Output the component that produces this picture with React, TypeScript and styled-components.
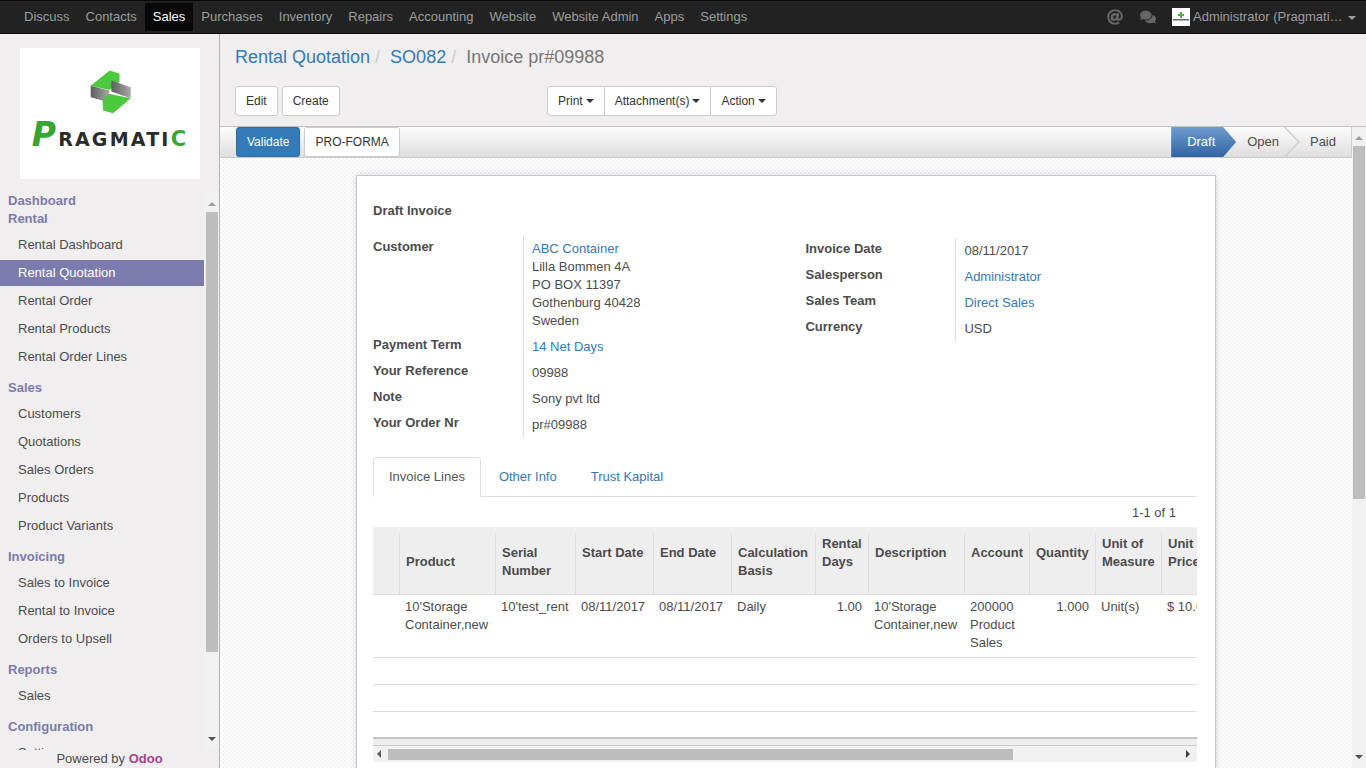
import React from 'react';
import styled, { createGlobalStyle } from 'styled-components';
import { FaAt, FaComments } from 'react-icons/fa';

const GlobalStyle = createGlobalStyle`
  html, body {
    margin: 0;
    height: 100%;
    overflow: hidden;
  }
  body {
    font-family: "Liberation Sans", Arial, sans-serif;
    font-size: 13px;
    line-height: 18px;
    color: #4c4c4c;
  }
  * {
    box-sizing: border-box;
  }
`;

const Page = styled.div`
  display: flex;
  flex-direction: column;
  width: 1366px;
  height: 768px;
  overflow: hidden;
`;

const Navbar = styled.nav`
  display: flex;
  align-items: center;
  justify-content: space-between;
  height: 34px;
  flex: none;
  padding: 0 4px 0 16px;
  background: #222;
  border: 1px solid #080808;
  border-width: 1px 0;
`;

const NavList = styled.div`
  display: flex;
  align-items: center;
`;

const NavItem = styled.a<{ $active?: boolean }>`
  height: 28px;
  padding: 5px 8px;
  color: ${p => (p.$active ? '#fff' : '#9d9d9d')};
  background: ${p => (p.$active ? '#080808' : 'transparent')};
`;

const NavRight = styled.div`
  display: flex;
  align-items: center;
  color: #9d9d9d;
`;

const NavIcon = styled.span<{ $gap: number }>`
  display: flex;
  color: #666;
  font-size: 16px;
  margin-right: ${p => p.$gap}px;
`;

const Avatar = styled.svg`
  width: 18px;
  height: 18px;
  margin-right: 3px;
  background: #fff;
`;

const UserName = styled.span`
  width: 150px;
  white-space: nowrap;
  overflow: hidden;
  text-overflow: ellipsis;
`;

const NavCaret = styled.span`
  width: 0;
  height: 0;
  margin: 2px 6px 0 5px;
  border-left: 4px solid transparent;
  border-right: 4px solid transparent;
  border-top: 4px solid #9d9d9d;
`;

const Body = styled.div`
  display: flex;
  flex: 1;
  min-height: 0;
`;

const Sidebar = styled.aside`
  display: flex;
  flex-direction: column;
  width: 220px;
  flex: none;
  background: #f0eeee;
  border-right: 1px solid #b4b4b4;
`;

const LogoBox = styled.div`
  display: flex;
  flex-direction: column;
  align-items: center;
  width: 180px;
  height: 131px;
  margin: 14px 0 13px 20px;
  padding-top: 20px;
  background: #fff;
  flex: none;
`;

const LogoWord = styled.div`
  display: flex;
  align-items: baseline;
  margin-top: 7px;
  font-family: "DejaVu Sans", sans-serif;
  font-weight: 700;
  font-size: 19px;
  line-height: 26px;
  letter-spacing: 2.2px;
  color: #2b2b2b;
  white-space: nowrap;
`;

const LogoGreen = styled.span<{ $big?: boolean }>`
  color: #3aa535;
  font-style: ${p => (p.$big ? 'italic' : 'normal')};
  font-size: ${p => (p.$big ? 33 : 21)}px;
  line-height: 26px;
`;

const MenuArea = styled.div`
  display: flex;
  flex: 1;
  min-height: 0;
`;

const MenuScroll = styled.div`
  width: 204px;
  overflow: hidden;
  flex: none;
`;

const MenuHeader = styled.div`
  padding-left: 8px;
  font-weight: 700;
  color: #7c7bad;
`;

const MenuList = styled.div`
  display: flex;
  flex-direction: column;
  gap: 2px;
  margin: 4px 0 9px;
`;

const MenuItem = styled.a<{ $active?: boolean }>`
  height: 26px;
  flex: none;
  padding: 4px 0 0 18px;
  color: ${p => (p.$active ? '#fff' : '#4c4c4c')};
  background: ${p => (p.$active ? '#7c7bad' : 'transparent')};
`;

const Track = styled.div<{ $wide: number }>`
  display: flex;
  flex-direction: column;
  align-items: center;
  width: ${p => p.$wide}px;
  flex: none;
  background: #f1f1f1;
`;

const TrackThumb = styled.div<{ $height: number; $top: number }>`
  width: 12px;
  height: ${p => p.$height}px;
  margin-top: ${p => p.$top}px;
  background: #bdbdbd;
  flex: none;
`;

const TrackSpacer = styled.div`
  flex: 1;
`;

const Arrow = styled.span<{ $dir: 'up' | 'down' | 'left' | 'right'; $color?: string }>`
  width: 0;
  height: 0;
  flex: none;
  border: 4px solid transparent;
  ${p => `border-${{ up: 'bottom', down: 'top', left: 'right', right: 'left' }[p.$dir]}-color: ${p.$color || '#505050'};`}
  ${p => `border-${p.$dir}-width: 0;`}
`;

const PoweredBy = styled.div`
  height: 18px;
  flex: none;
  text-align: center;
  line-height: 17px;
`;

const OdooWord = styled.b`
  color: #a24689;
`;

const Main = styled.main`
  display: flex;
  flex-direction: column;
  flex: 1;
  min-width: 0;
`;

const ControlPanel = styled.header`
  height: 93px;
  flex: none;
  padding: 10px 15px 0;
  background: #f0eeee;
  border-bottom: 1px solid #c0c0c0;
`;

const Breadcrumb = styled.div`
  display: flex;
  height: 26px;
  margin-bottom: 16px;
  font-size: 18px;
  line-height: 26px;
`;

const Crumb = styled.a<{ $current?: boolean }>`
  color: ${p => (p.$current ? '#777' : '#337ab7')};
`;

const CrumbSep = styled.span`
  padding: 0 5px;
  margin-right: 5px;
  color: #ccc;
`;

const Buttons = styled.div`
  display: flex;
`;

const LeftButtons = styled.div`
  display: flex;
  gap: 4px;
  width: 312px;
`;

const Button = styled.button`
  height: 30px;
  padding: 5px 10px;
  font: 12px/18px "Liberation Sans", Arial, sans-serif;
  color: #333;
  background: #fff;
  border: 1px solid #ccc;
  border-radius: 3px;
`;

const Group = styled.div`
  display: flex;
`;

const GroupButton = styled(Button)`
  display: flex;
  align-items: center;
  gap: 3px;
  border-radius: 0;
  margin-left: -1px;
  &:first-child {
    margin-left: 0;
    border-radius: 3px 0 0 3px;
  }
  &:last-child {
    border-radius: 0 3px 3px 0;
  }
`;

const Caret = styled.span`
  width: 0;
  height: 0;
  border-left: 4px solid transparent;
  border-right: 4px solid transparent;
  border-top: 4px solid #333;
`;

const Lower = styled.div`
  display: flex;
  flex: 1;
  min-height: 0;
`;

const Content = styled.div`
  display: flex;
  flex-direction: column;
  flex: 1;
  min-width: 0;
`;

const StatusBar = styled.div`
  display: flex;
  justify-content: space-between;
  height: 31px;
  flex: none;
  background: linear-gradient(#fcfcfc, #dedede);
  border-bottom: 1px solid #c8c8c8;
  border-right: 1px solid #cfcfcf;
`;

const StatusButtons = styled.div`
  display: flex;
  gap: 4px;
  padding-left: 16px;
`;

const PrimaryButton = styled(Button)`
  color: #fff;
  background: #337ab7;
  border-color: #2e6da4;
`;

const Steps = styled.div`
  display: flex;
  align-items: stretch;
  line-height: 30px;
`;

const ActiveStep = styled.div`
  width: 65px;
  padding-left: 16px;
  color: #fff;
  background: linear-gradient(#6c9ccd, #3464a3);
  clip-path: polygon(0 0, 52px 0, 100% 50%, 52px 100%, 0 100%);
`;

const Step = styled.div<{ $pad: number; $end?: number }>`
  padding-left: ${p => p.$pad}px;
  padding-right: ${p => p.$end || 0}px;
`;

const StepChevron = styled.svg`
  width: 16px;
  height: 30px;
  margin-left: 5px;
`;

const FormArea = styled.div`
  flex: 1;
  min-height: 0;
  overflow: hidden;
  padding-top: 17px;
  background: repeating-conic-gradient(#f5f5f5 0 25%, #fff 0 50%) 0 0 / 4px 4px;
`;

const Sheet = styled.section`
  width: 860px;
  height: 640px;
  margin: 0 auto;
  padding: 26px 18px 0 16px;
  background: #fff;
  border: 1px solid #c8c8d3;
  border-bottom: 0;
  box-shadow: 0 0 6px rgba(0, 0, 0, 0.16);
`;

const SheetTitle = styled.div`
  height: 34px;
  font-weight: 700;
`;

const Groups = styled.div`
  display: flex;
`;

const FieldGroup = styled.div<{ $top: number; $width: number; $label: number }>`
  display: grid;
  grid-template-columns: ${p => p.$label}px 1fr;
  align-content: start;
  width: ${p => p.$width}px;
  margin-top: ${p => p.$top}px;
`;

const FieldLabel = styled.div<{ $pad: number }>`
  padding-top: ${p => p.$pad}px;
  font-weight: 700;
`;

const FieldValue = styled.div`
  padding: 4px 0 4px 8px;
  border-left: 1px solid #ddd;
`;

const Link = styled.a`
  color: #337ab7;
`;

const Tabs = styled.div`
  display: flex;
  gap: 2px;
  height: 40px;
  margin-top: 19px;
  border-bottom: 1px solid #ddd;
`;

const Tab = styled.a<{ $active?: boolean }>`
  height: 40px;
  padding: 10px 15px;
  border: 1px solid ${p => (p.$active ? '#ddd' : 'transparent')};
  border-bottom-color: ${p => (p.$active ? '#fff' : 'transparent')};
  border-radius: 4px 4px 0 0;
  background: ${p => (p.$active ? '#fff' : 'transparent')};
  color: ${p => (p.$active ? '#555' : '#337ab7')};
`;

const Pager = styled.div`
  height: 30px;
  padding: 7px 21px 0 0;
  text-align: right;
`;

const TableClip = styled.div`
  width: 824px;
  overflow: hidden;
`;

const Table = styled.table`
  width: 900px;
  table-layout: fixed;
  border-collapse: separate;
  border-spacing: 0;
`;

const HeadCell = styled.th<{ $top: number }>`
  height: 68px;
  padding: ${p => p.$top}px 4px 0 7px;
  vertical-align: top;
  text-align: left;
  font-weight: 700;
  background: #eee linear-gradient(#ddd, #ddd) left 6px / 1px 100% no-repeat;
  border-bottom: 1px solid #ddd;
  &:first-child {
    background: #eee;
  }
`;

const Cell = styled.td<{ $right?: boolean; $line?: boolean }>`
  padding: 3px ${p => (p.$right ? 6 : 0)}px 5px 6px;
  vertical-align: top;
  text-align: ${p => (p.$right ? 'right' : 'left')};
  border-bottom: 1px solid #ddd;
`;

const BlankRow = styled.tr`
  height: 27px;
  td {
    border-bottom: 1px solid #ddd;
  }
`;

const TableFoot = styled.div`
  height: 9px;
  margin-top: 25px;
  background: #eee;
  border-top: 2px solid #c4c4c4;
  border-bottom: 1px solid #ccc;
`;

const HScroll = styled.div`
  display: flex;
  align-items: center;
  width: 824px;
  height: 16px;
  padding: 0 4px;
  background: #f1f1f1;
`;

const HThumb = styled.div`
  width: 625px;
  height: 11px;
  margin: 0 173px 0 7px;
  background: #bdbdbd;
`;

const columns = [26, 96, 80, 78, 78, 84, 53, 96, 65, 66, 66, 112];

const heads: { label: React.ReactNode; top: number }[] = [
  { label: '', top: 0 },
  { label: 'Product', top: 26 },
  { label: <>Serial<br />Number</>, top: 17 },
  { label: 'Start Date', top: 17 },
  { label: 'End Date', top: 17 },
  { label: <>Calculation<br />Basis</>, top: 17 },
  { label: <>Rental<br />Days</>, top: 8 },
  { label: 'Description', top: 17 },
  { label: 'Account', top: 17 },
  { label: 'Quantity', top: 17 },
  { label: <>Unit of<br />Measure</>, top: 8 },
  { label: <>Unit<br />Price</>, top: 8 },
];

const menu = [
  { title: 'Dashboard', items: [] as string[] },
  { title: 'Rental', items: ['Rental Dashboard', 'Rental Quotation', 'Rental Order', 'Rental Products', 'Rental Order Lines'] },
  { title: 'Sales', items: ['Customers', 'Quotations', 'Sales Orders', 'Products', 'Product Variants'] },
  { title: 'Invoicing', items: ['Sales to Invoice', 'Rental to Invoice', 'Orders to Upsell'] },
  { title: 'Reports', items: ['Sales'] },
  { title: 'Configuration', items: ['Settings'] },
];

const navItems = ['Discuss', 'Contacts', 'Sales', 'Purchases', 'Inventory', 'Repairs', 'Accounting', 'Website', 'Website Admin', 'Apps', 'Settings'];

const PragmaticMark: React.FC = () => (
  <svg width="45" height="47" viewBox="60 35 135 140">
    <defs>
      <linearGradient id="band" x1="0" y1="0" x2="1" y2="0">
        <stop offset="0" stopColor="#5d5d5d" />
        <stop offset="1" stopColor="#a9a9a9" />
      </linearGradient>
    </defs>
    <polygon points="125,42 155,52 154,76 128,98 122,100 68,88" fill="#4cc93c" />
    <polygon points="68,88 124,102 122,137 68,122" fill="url(#band)" />
    <polygon points="130,72 188,92 188,125 130,105" fill="url(#band)" />
    <polygon points="122,112 188,125 135,170 105,162 104,132" fill="#4cc93c" />
  </svg>
);

const App: React.FC = () => {
  return (
    <Page>
      <GlobalStyle />
      <Navbar>
        <NavList>
          {navItems.map(item => (
            <NavItem key={item} $active={item === 'Sales'}>{item}</NavItem>
          ))}
        </NavList>
        <NavRight>
          <NavIcon $gap={17}><FaAt /></NavIcon>
          <NavIcon $gap={16}><FaComments /></NavIcon>
          <Avatar viewBox="0 0 18 18">
            <rect x="8" y="4" width="2" height="6" fill="#4cae3f" />
            <rect x="6" y="6" width="6" height="2" fill="#4cae3f" />
            <rect x="1" y="11" width="16" height="1.5" fill="#667" />
          </Avatar>
          <UserName>Administrator (Pragmatic Techsoft Pvt Ltd)</UserName>
          <NavCaret />
        </NavRight>
      </Navbar>
      <Body>
        <Sidebar>
          <LogoBox>
            <PragmaticMark />
            <LogoWord>
              <LogoGreen $big>P</LogoGreen>RAGMATI<LogoGreen>C</LogoGreen>
            </LogoWord>
          </LogoBox>
          <MenuArea>
            <MenuScroll>
              {menu.map(section => (
                <React.Fragment key={section.title}>
                  <MenuHeader>{section.title}</MenuHeader>
                  {section.items.length > 0 && (
                    <MenuList>
                      {section.items.map(item => (
                        <MenuItem key={item} $active={item === 'Rental Quotation'}>{item}</MenuItem>
                      ))}
                    </MenuList>
                  )}
                </React.Fragment>
              ))}
            </MenuScroll>
            <Track $wide={15}>
              <TrackThumb $height={0} $top={6} />
              <Arrow $dir="up" $color="#a0a0a0" />
              <TrackThumb $height={440} $top={6} />
              <TrackSpacer />
              <Arrow $dir="down" />
              <TrackThumb $height={0} $top={5} />
            </Track>
          </MenuArea>
          <PoweredBy>Powered by <OdooWord>Odoo</OdooWord></PoweredBy>
        </Sidebar>
        <Main>
          <ControlPanel>
            <Breadcrumb>
              <Crumb>Rental Quotation</Crumb>
              <CrumbSep>/</CrumbSep>
              <Crumb>SO082</Crumb>
              <CrumbSep>/</CrumbSep>
              <Crumb $current>Invoice pr#09988</Crumb>
            </Breadcrumb>
            <Buttons>
              <LeftButtons>
                <Button>Edit</Button>
                <Button>Create</Button>
              </LeftButtons>
              <Group>
                <GroupButton>Print <Caret /></GroupButton>
                <GroupButton>Attachment(s) <Caret /></GroupButton>
                <GroupButton>Action <Caret /></GroupButton>
              </Group>
            </Buttons>
          </ControlPanel>
          <Lower>
            <Content>
              <StatusBar>
                <StatusButtons>
                  <PrimaryButton>Validate</PrimaryButton>
                  <Button>PRO-FORMA</Button>
                </StatusButtons>
                <Steps>
                  <ActiveStep>Draft</ActiveStep>
                  <Step $pad={11}>Open</Step>
                  <StepChevron viewBox="0 0 16 30">
                    <polyline points="0.5,0 15,15 0.5,30" fill="none" stroke="#d0d0d0" strokeWidth="1.5" />
                  </StepChevron>
                  <Step $pad={10} $end={15}>Paid</Step>
                </Steps>
              </StatusBar>
              <FormArea>
                <Sheet>
                  <SheetTitle>Draft Invoice</SheetTitle>
                  <Groups>
                    <FieldGroup $top={0} $width={433} $label={150}>
                      <FieldLabel $pad={2}>Customer</FieldLabel>
                      <FieldValue>
                        <Link>ABC Container</Link><br />
                        Lilla Bommen 4A<br />
                        PO BOX 11397<br />
                        Gothenburg 40428<br />
                        Sweden
                      </FieldValue>
                      <FieldLabel $pad={2}>Payment Term</FieldLabel>
                      <FieldValue><Link>14 Net Days</Link></FieldValue>
                      <FieldLabel $pad={2}>Your Reference</FieldLabel>
                      <FieldValue>09988</FieldValue>
                      <FieldLabel $pad={2}>Note</FieldLabel>
                      <FieldValue>Sony pvt ltd</FieldValue>
                      <FieldLabel $pad={2}>Your Order Nr</FieldLabel>
                      <FieldValue>pr#09988</FieldValue>
                    </FieldGroup>
                    <FieldGroup $top={2} $width={392} $label={150}>
                      <FieldLabel $pad={2}>Invoice Date</FieldLabel>
                      <FieldValue>08/11/2017</FieldValue>
                      <FieldLabel $pad={2}>Salesperson</FieldLabel>
                      <FieldValue><Link>Administrator</Link></FieldValue>
                      <FieldLabel $pad={2}>Sales Team</FieldLabel>
                      <FieldValue><Link>Direct Sales</Link></FieldValue>
                      <FieldLabel $pad={2}>Currency</FieldLabel>
                      <FieldValue>USD</FieldValue>
                    </FieldGroup>
                  </Groups>
                  <Tabs>
                    <Tab $active>Invoice Lines</Tab>
                    <Tab>Other Info</Tab>
                    <Tab>Trust Kapital</Tab>
                  </Tabs>
                  <Pager>1-1 of 1</Pager>
                  <TableClip>
                    <Table style={{ width: columns.reduce((a, b) => a + b, 0) }}>
                      <colgroup>
                        {columns.map((w, i) => <col key={i} style={{ width: w }} />)}
                      </colgroup>
                      <thead>
                        <tr>
                          {heads.map((h, i) => <HeadCell key={i} $top={h.top}>{h.label}</HeadCell>)}
                        </tr>
                      </thead>
                      <tbody>
                        <tr>
                          <Cell />
                          <Cell>10'Storage Container,new</Cell>
                          <Cell>10'test_rent</Cell>
                          <Cell>08/11/2017</Cell>
                          <Cell>08/11/2017</Cell>
                          <Cell>Daily</Cell>
                          <Cell $right>1.00</Cell>
                          <Cell>10'Storage Container,new</Cell>
                          <Cell>200000 Product Sales</Cell>
                          <Cell $right>1.000</Cell>
                          <Cell>Unit(s)</Cell>
                          <Cell>$ 10.00</Cell>
                        </tr>
                        <BlankRow><td colSpan={12} /></BlankRow>
                        <BlankRow><td colSpan={12} /></BlankRow>
                      </tbody>
                    </Table>
                  </TableClip>
                  <TableFoot />
                  <HScroll>
                    <Arrow $dir="left" $color="#606060" />
                    <HThumb />
                    <Arrow $dir="right" $color="#404040" />
                  </HScroll>
                </Sheet>
              </FormArea>
            </Content>
            <Track $wide={14}>
              <TrackThumb $height={0} $top={5} />
              <Arrow $dir="up" $color="#a0a0a0" />
              <TrackThumb $height={353} $top={6} />
              <TrackSpacer />
              <Arrow $dir="down" />
              <TrackThumb $height={0} $top={5} />
            </Track>
          </Lower>
        </Main>
      </Body>
    </Page>
  );
};

export default App;
